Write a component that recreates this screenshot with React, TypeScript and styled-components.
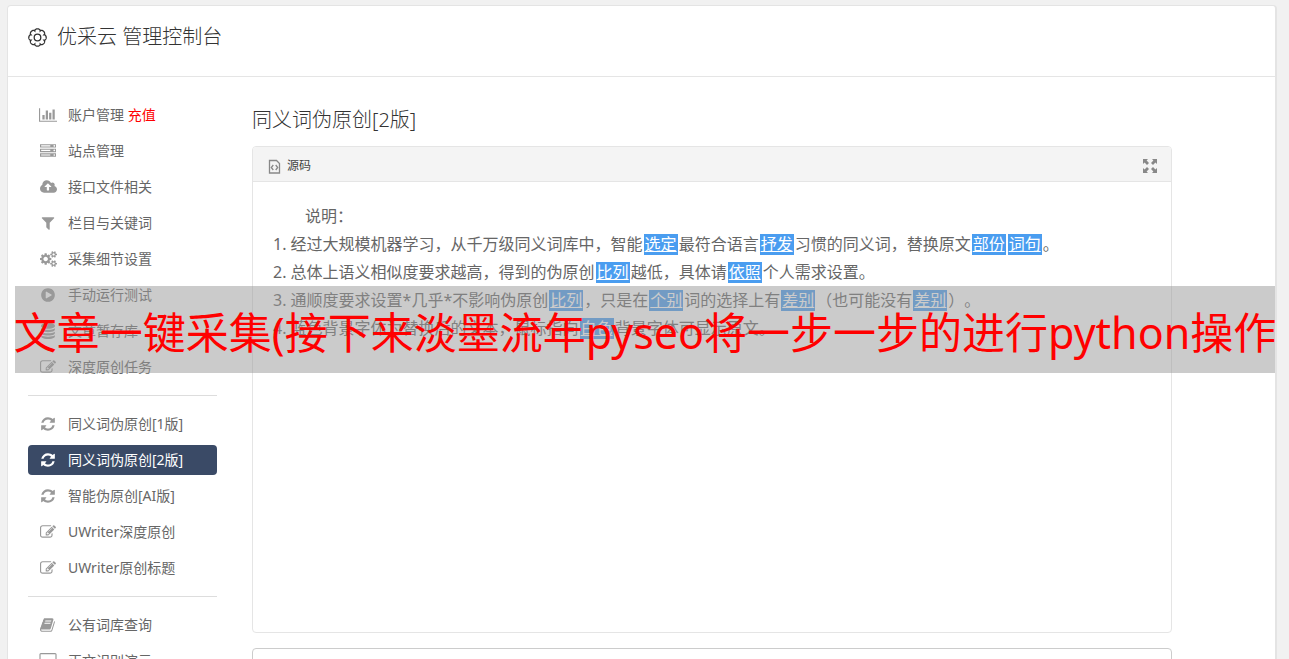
import React from "react";
import styled, { createGlobalStyle } from "styled-components";

const GlobalStyle = createGlobalStyle`
  * { box-sizing: border-box; }
  html, body, #root { height: 100%; }
  body {
    margin: 0;
    overflow: hidden;
    background: #f1f1f1;
    color: #666;
    font-family: "Noto Sans", "Noto Sans CJK SC", sans-serif;
    font-size: 14px;
    text-spacing-trim: space-all;
  }
`;

type IconDef = { box: string; width: number; d: string };

const icons: Record<string, IconDef> = {
  chart: {
    box: "0 0 2048 1792",
    width: 18,
    d: "M640 896v512h-256v-512h256zm384-512v1024h-256v-1024h256zm1024 1152v128h-2048v-1536h128v1408h1920zm-640-896v768h-256v-768h256zm384-384v1152h-256v-1152h256z",
  },
  server: {
    box: "0 0 1792 1792",
    width: 16,
    d: "M128 1408h1024v-128h-1024v128zm0-512h1024v-128h-1024v128zm1568 448q0-40-28-68t-68-28-68 28-28 68 28 68 68 28 68-28 28-68zm-1568-960h1024v-128h-1024v128zm1568 448q0-40-28-68t-68-28-68 28-28 68 28 68 68 28 68-28 28-68zm0-512q0-40-28-68t-68-28-68 28-28 68 28 68 68 28 68-28 28-68zm96 832v384h-1792v-384h1792zm0-512v384h-1792v-384h1792zm0-512v384h-1792v-384h1792z",
  },
  cloud: {
    box: "-64 0 1920 1792",
    width: 17,
    d: "M1216 864q0-14-9-23l-352-352q-9-9-23-9t-23 9l-351 351q-10 12-10 24 0 14 9 23t23 9h224v352q0 13 9.5 22.5t22.5 9.5h192q13 0 22.5-9.5t9.5-22.5v-352h224q13 0 22.5-9.5t9.5-22.5zm640 288q0 159-112.5 271.5t-271.5 112.5h-1088q-185 0-316.5-131.5t-131.5-316.5q0-130 70-240t188-165q-2-30-2-43 0-212 150-362t362-150q156 0 285.5 87t188.5 231q71-62 166-62 106 0 181 75t75 181q0 76-41 138 130 31 213.5 135.5t83.5 238.5z",
  },
  filter: {
    box: "0 0 1792 1792",
    width: 16,
    d: "M1595 295q17 41-14 70l-493 493v742q0 42-39 59-13 5-25 5-27 0-45-19l-256-256q-19-19-19-45v-486l-493-493q-31-29-14-70 17-39 59-39h1280q42 0 59 39z",
  },
  cogs: {
    box: "-64 0 1920 1792",
    width: 17,
    d: "M832 896q0-106-75-181t-181-75-181 75-75 181 75 181 181 75 181-75 75-181zm768 512q0-52-38-90t-90-38-90 38-38 90q0 53 37.5 90.5t90.5 37.5 90.5-37.5 37.5-90.5zm0-1024q0-52-38-90t-90-38-90 38-38 90q0 53 37.5 90.5t90.5 37.5 90.5-37.5 37.5-90.5zm-384 421v185q0 10-7 19.5t-16 10.5l-155 24q-11 35-32 76 34 48 90 115 7 10 7 20 0 12-7 19-23 30-82.5 89.5t-78.5 59.5q-11 0-21-7l-115-90q-37 19-77 31-11 108-23 155-7 24-30 24h-186q-11 0-20-7.5t-10-17.5l-23-153q-34-10-75-31l-118 89q-7 7-20 7-11 0-21-8-144-133-144-160 0-9 7-19 10-14 41-53t47-61q-23-44-35-82l-152-24q-10-1-17-9.5t-7-19.5v-185q0-10 7-19.5t16-10.5l155-24q11-35 32-76-34-48-90-115-7-11-7-20 0-12 7-20 22-30 82-89t79-59q11 0 21 7l115 90q34-18 77-32 11-108 23-154 7-24 30-24h186q11 0 20 7.5t10 17.5l23 153q34 10 75 31l118-89q8-7 20-7 11 0 21 8 144 133 144 160 0 9-7 19-12 16-42 54t-45 60q23 48 34 82l152 23q10 2 17 10.5t7 19.5zm640 533v140q0 16-149 31-12 27-30 52 51 113 51 138 0 4-4 7-122 71-124 71-8 0-46-47t-52-68q-20 2-30 2t-30-2q-14 21-52 68t-46 47q-2 0-124-71-4-3-4-7 0-25 51-138-18-25-30-52-149-15-149-31v-140q0-16 149-31 13-29 30-52-51-113-51-138 0-4 4-7 4-2 35-20t59-34 30-16q8 0 46 46.5t52 67.5q20-2 30-2t30 2q51-71 92-112l6-2q4 0 124 70 4 3 4 7 0 25-51 138 17 23 30 52 149 15 149 31zm0-1024v140q0 16-149 31-12 27-30 52 51 113 51 138 0 4-4 7-122 71-124 71-8 0-46-47t-52-68q-20 2-30 2t-30-2q-14 21-52 68t-46 47q-2 0-124-71-4-3-4-7 0-25 51-138-18-25-30-52-149-15-149-31v-140q0-16 149-31 13-29 30-52-51-113-51-138 0-4 4-7 4-2 35-20t59-34 30-16q8 0 46 46.5t52 67.5q20-2 30-2t30 2q51-71 92-112l6-2q4 0 124 70 4 3 4 7 0 25-51 138 17 23 30 52 149 15 149 31z",
  },
  play: {
    box: "0 0 1792 1792",
    width: 16,
    d: "M896 128q209 0 385.5 103t279.5 279.5 103 385.5-103 385.5-279.5 279.5-385.5 103-385.5-103-279.5-279.5-103-385.5 103-385.5 279.5-279.5 385.5-103zm384 823q32-18 32-55t-32-55l-544-320q-31-19-64-1-32 19-32 56v640q0 37 32 56 16 8 32 8 17 0 32-9z",
  },
  database: {
    box: "0 0 1792 1792",
    width: 16,
    d: "M896 768q237 0 443-43t325-127v170q0 69-103 128t-280 93.5-385 34.5-385-34.5-280-93.5-103-128v-170q119 84 325 127t443 43zm0 768q237 0 443-43t325-127v170q0 69-103 128t-280 93.5-385 34.5-385-34.5-280-93.5-103-128v-170q119 84 325 127t443 43zm0-384q237 0 443-43t325-127v170q0 69-103 128t-280 93.5-385 34.5-385-34.5-280-93.5-103-128v-170q119 84 325 127t443 43zm0-1152q208 0 385 34.5t280 93.5 103 128v128q0 69-103 128t-280 93.5-385 34.5-385-34.5-280-93.5-103-128v-128q0-69 103-128t280-93.5 385-34.5z",
  },
  edit: {
    box: "0 0 1792 1792",
    width: 16,
    d: "M888 1184l116-116-152-152-116 116v56h96v96h56zm440-720q-16-16-33 1l-350 350q-17 17-1 33t33-1l350-350q17-17 1-33zm80 594v190q0 119-84.5 203.5t-203.5 84.5h-832q-119 0-203.5-84.5t-84.5-203.5v-832q0-119 84.5-203.5t203.5-84.5h832q63 0 117 25 15 7 18 23 3 17-9 29l-49 49q-14 14-32 8-23-6-45-6h-832q-66 0-113 47t-47 113v832q0 66 47 113t113 47h832q66 0 113-47t47-113v-126q0-13 9-22l64-64q15-15 35-7t20 29zm-96-738l288 288-672 672h-288v-288zm444 132l-92 92-288-288 92-92q28-28 68-28t68 28l152 152q28 28 28 68t-28 68z",
  },
  refresh: {
    box: "0 0 1792 1792",
    width: 16,
    d: "M1639 1056q0 5-1 7-64 268-268 434.5t-478 166.5q-146 0-282.5-55t-243.5-157l-129 129q-19 19-45 19t-45-19-19-45v-448q0-26 19-45t45-19h448q26 0 45 19t19 45-19 45l-137 137q71 66 161 102t187 36q134 0 250-65t186-179q11-17 53-117 8-23 30-23h192q13 0 22.5 9.5t9.5 22.5zm25-800v448q0 26-19 45t-45 19h-448q-26 0-45-19t-19-45 19-45l138-138q-148-137-349-137-134 0-250 65t-186 179q-11 17-53 117-8 23-30 23h-199q-13 0-22.5-9.5t-9.5-22.5v-7q65-268 270-434.5t480-166.5q146 0 284 55.5t245 156.5l130-129q19-19 45-19t45 19 19 45z",
  },
  book: {
    box: "0 0 1792 1792",
    width: 16,
    d: "M1639 478q40 57 18 129l-275 906q-19 64-76.5 107.5t-122.5 43.5h-923q-77 0-148.5-53.5t-99.5-131.5q-24-67-2-127 0-4 3-27t4-37q1-8-3-21.5t-3-19.5q2-11 8-21t16.5-23.5 16.5-23.5q23-38 45-91.5t30-91.5q3-10 .5-30t-.5-28q3-11 17-28t17-23q21-36 42-92t25-90q1-9-2.5-32t.5-28q4-13 22-30.5t22-22.5q19-26 42.5-84.5t27.5-96.5q1-8-3-25.5t-2-26.5q2-8 9-18t18-23 17-21q8-12 16.5-30.5t15-35 16-36 19.5-32 26.5-23.5 36-11.5 47.5 5.5l-1 3q38-9 51-9h761q74 0 114 56t18 130l-274 906q-36 119-71.5 153.5t-128.5 34.5h-869q-27 0-38 15-11 16-1 43 24 70 144 70h923q29 0 56-15.5t35-41.5l300-987q7-22 5-57 38 15 59 43zm-1064 2q-4 13 2 22.5t20 9.5h608q13 0 25.5-9.5t16.5-22.5l21-64q4-13-2-22.5t-20-9.5h-608q-13 0-25.5 9.5t-16.5 22.5zm-83 256q-4 13 2 22.5t20 9.5h608q13 0 25.5-9.5t16.5-22.5l21-64q4-13-2-22.5t-20-9.5h-608q-13 0-25.5 9.5t-16.5 22.5z",
  },
  desktop: {
    box: "-64 0 1920 1792",
    width: 18,
    d: "M1728 992v-832q0-13-9.5-22.5t-22.5-9.5h-1600q-13 0-22.5 9.5t-9.5 22.5v832q0 13 9.5 22.5t22.5 9.5h1600q13 0 22.5-9.5t9.5-22.5zm128-832v1088q0 66-47 113t-113 47h-544q0 37 16 77.5t32 71 16 43.5q0 26-19 45t-45 19h-512q-26 0-45-19t-19-45q0-14 16-44t32-70 16-78h-544q-66 0-113-47t-47-113v-1088q0-66 47-113t113-47h1600q66 0 113 47t47 113z",
  },
};

const Window = styled.div`
  display: flex;
  flex-direction: column;
  height: 100%;
  margin: 0 12px 0 7px;
  padding-top: 5px;
`;

const Shell = styled.div`
  flex: 1;
  min-height: 0;
  overflow: hidden;
  display: flex;
  flex-direction: column;
  background: #fff;
  border: 1px solid #e4e4e4;
  border-right-width: 2px;
  border-bottom: 0;
  border-radius: 4px 4px 0 0;
`;

const Header = styled.header`
  display: flex;
  align-items: center;
  gap: 10px;
  height: 71px;
  flex: none;
  padding: 0 20px 8px;
  border-bottom: 1px solid #e5e5e5;
  color: #333;
`;

const Title = styled.h1`
  margin: 0;
  font-size: 20px;
  line-height: 28px;
  font-weight: 300;
`;

const Columns = styled.div`
  display: flex;
  flex: 1;
  min-height: 0;
  gap: 35px;
  padding: 23px 103px 0 20px;
`;

const Sidebar = styled.nav`
  flex: none;
  width: 189px;
`;

const Menu = styled.ul`
  margin: 0;
  padding: 0;
  list-style: none;
  display: flex;
  flex-direction: column;
  gap: 6px;

  & + & {
    margin-top: 13px;
    padding-top: 13px;
    border-top: 1px solid #ddd;
  }
`;

const MenuLink = styled.a<{ $active?: boolean }>`
  display: flex;
  align-items: center;
  gap: 10px;
  height: 30px;
  padding-left: 10px;
  border-radius: 4px;
  font-size: 14px;
  line-height: 20px;
  text-decoration: none;
  white-space: nowrap;
  color: ${(p) => (p.$active ? "#fff" : "#666")};
  background: ${(p) => (p.$active ? "#3a4a66" : "transparent")};

  svg {
    fill: ${(p) => (p.$active ? "#fff" : "#999")};
  }
`;

const IconSlot = styled.span`
  display: flex;
  justify-content: center;
  width: 20px;
`;

const Recharge = styled.span`
  color: #f00;
`;

const Main = styled.main`
  flex: 1;
  min-width: 0;
  padding-top: 6px;
`;

const PageTitle = styled.h2`
  margin: 0 0 12px;
  font-size: 20px;
  line-height: 28px;
  font-weight: 300;
  color: #333;
`;

const Editor = styled.section`
  height: 487px;
  border: 1px solid #e5e5e5;
  border-radius: 4px;
  overflow: hidden;
`;

const Toolbar = styled.div`
  display: flex;
  align-items: center;
  justify-content: space-between;
  height: 35px;
  padding: 3px 14px 0 15px;
  background: #f4f4f4;
  border-bottom: 1px solid #e5e5e5;
`;

const ToolButton = styled.button`
  display: flex;
  align-items: center;
  gap: 6px;
  padding: 0;
  border: 0;
  background: none;
  font: inherit;
  font-size: 12px;
  line-height: 18px;
  color: #444;
`;

const Article = styled.div`
  padding: 20px;
  font-size: 16px;
  line-height: 28px;
  color: #666;
`;

const Intro = styled.p`
  margin: 0;
  text-indent: 2em;
`;

const Line = styled.p`
  margin: 0;
`;

const Mark = styled.span`
  display: inline-block;
  margin: 0 1px;
  padding: 0 1px;
  background: #4a9df0;
  color: #fff;
  text-decoration: underline;
  line-height: 21px;
`;

const SecondEditor = styled.section`
  height: 120px;
  margin-top: 15px;
  border: 1px solid #ccc;
  border-radius: 4px;
`;

const Banner = styled.div`
  position: absolute;
  top: 286px;
  left: 15px;
  right: 14px;
  height: 87px;
  display: flex;
  align-items: center;
  justify-content: center;
  padding-top: 6px;
  background: rgba(153, 153, 153, 0.51);
`;

const BannerText = styled.p`
  flex: none;
  margin: 0;
  font-size: 43px;
  line-height: 60px;
  white-space: nowrap;
  color: #f00;
`;

const Icon = ({ name }: { name: string }) => {
  const icon = icons[name];
  return (
    <IconSlot>
      <svg width={icon.width} height={16} viewBox={icon.box} aria-hidden="true">
        <path d={icon.d} />
      </svg>
    </IconSlot>
  );
};

// Outline of the header gear: eight rounded lobes that meet in sharp notches.
const gearOutline = () => {
  const points: string[] = [];
  for (let i = 0; i < 160; i++) {
    const a = (i / 160) * Math.PI * 2;
    const r = 7 + 1.7 * Math.sqrt(Math.abs(Math.cos(4 * a)));
    points.push(`${(9.5 + r * Math.sin(a)).toFixed(2)} ${(9.5 - r * Math.cos(a)).toFixed(2)}`);
  }
  return `M${points.join("L")}Z`;
};

const Gear = () => (
  <svg width="19" height="19" viewBox="0 0 19 19" fill="none" stroke="#333" strokeWidth="1.3" aria-hidden="true">
    <path d={gearOutline()} />
    <circle cx="9.5" cy="9.5" r="3.3" />
  </svg>
);

type Item = { icon: string; text: string; extra?: string; active?: boolean };

const groups: Item[][] = [
  [
    { icon: "chart", text: "账户管理", extra: "充值" },
    { icon: "server", text: "站点管理" },
    { icon: "cloud", text: "接口文件相关" },
    { icon: "filter", text: "栏目与关键词" },
    { icon: "cogs", text: "采集细节设置" },
    { icon: "play", text: "手动运行测试" },
    { icon: "database", text: "文章暂存库" },
    { icon: "edit", text: "深度原创任务" },
  ],
  [
    { icon: "refresh", text: "同义词伪原创[1版]" },
    { icon: "refresh", text: "同义词伪原创[2版]", active: true },
    { icon: "refresh", text: "智能伪原创[AI版]" },
    { icon: "edit", text: "UWriter深度原创" },
    { icon: "edit", text: "UWriter原创标题" },
  ],
  [
    { icon: "book", text: "公有词库查询" },
    { icon: "desktop", text: "正文识别演示" },
  ],
];

export default function App() {
  return (
    <>
      <GlobalStyle />
      <Window>
        <Shell>
          <Header>
            <Gear />
            <Title>优采云 管理控制台</Title>
          </Header>
          <Columns>
            <Sidebar>
              {groups.map((items, g) => (
                <Menu key={g}>
                  {items.map((item) => (
                    <li key={item.text}>
                      <MenuLink href="#" $active={item.active}>
                        <Icon name={item.icon} />
                        <span>
                          {item.text}
                          {item.extra && <Recharge> {item.extra}</Recharge>}
                        </span>
                      </MenuLink>
                    </li>
                  ))}
                </Menu>
              ))}
            </Sidebar>
            <Main>
              <PageTitle>同义词伪原创[2版]</PageTitle>
              <Editor>
                <Toolbar>
                  <ToolButton type="button">
                    <svg width="13" height="16" viewBox="0 0 13 16" fill="none" stroke="#888" strokeWidth="1.3" aria-hidden="true">
                      <path d="M1.5 2.5H8.5L11.5 5.5V15H1.5Z" />
                      <path d="M5.3 7L3.3 9.5L5.3 12M7.7 7L9.7 9.5L7.7 12" />
                    </svg>
                    源码
                  </ToolButton>
                  <ToolButton type="button" aria-label="全屏">
                    <svg width="14" height="14" viewBox="0 0 14 14" fill="#888" aria-hidden="true">
                      <path d="M0 0H5L3.6 1.6L6 4L4 6L1.6 3.6L0 5ZM14 0V5L12.4 3.6L10 6L8 4L10.4 1.6L9 0ZM0 14V9L1.6 10.4L4 8L6 10L3.6 12.4L5 14ZM14 14H9L10.4 12.4L8 10L10 8L12.4 10.4L14 9Z" />
                    </svg>
                  </ToolButton>
                </Toolbar>
                <Article>
                  <Intro>说明：</Intro>
                  <Line>
                    1. 经过大规模机器学习，从千万级同义词库中，智能<Mark>选定</Mark>最符合语言<Mark>抒发</Mark>习惯的同义词，替换原文<Mark>部份</Mark><Mark>词句</Mark>。
                  </Line>
                  <Line>
                    2. 总体上语义相似度要求越高，得到的伪原创<Mark>比列</Mark>越低，具体请<Mark>依照</Mark>个人需求设置。
                  </Line>
                  <Line>
                    3. 通顺度要求设置*几乎*不影响伪原创<Mark>比列</Mark>，只是在<Mark>个别</Mark>词的选择上有<Mark>差别</Mark>（也可能没有<Mark>差别</Mark>）。
                  </Line>
                  <Line>
                    4. 蓝色背景字体为替换后的文本，鼠标指向<Mark>白色</Mark>背景字体可显示原文。
                  </Line>
                </Article>
              </Editor>
              <SecondEditor />
            </Main>
          </Columns>
        </Shell>
      </Window>
      <Banner>
        <BannerText>文章一键采集(接下来淡墨流年pyseo将一步一步的进行python操作</BannerText>
      </Banner>
    </>
  );
}
